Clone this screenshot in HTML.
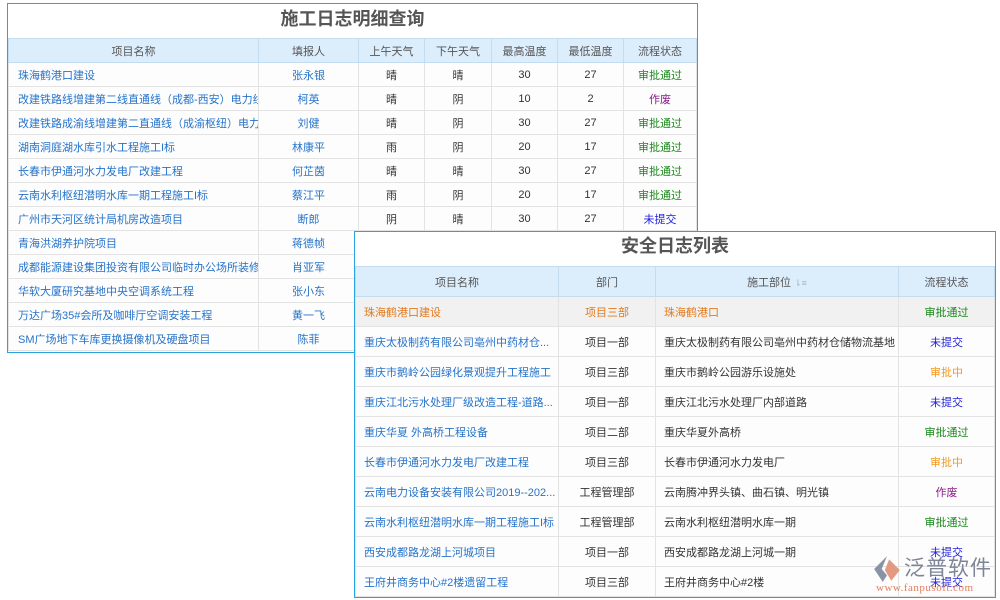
<!DOCTYPE html>
<html><head><meta charset="utf-8"><style>
*{margin:0;padding:0;box-sizing:border-box}
body{width:1000px;height:600px;background:#fff;position:relative;overflow:hidden;font-family:"Liberation Sans","Noto Sans CJK SC",sans-serif;font-size:11px}
.p{position:absolute;background:#fdfdfd;border:1px solid #29a3e0}
.t{text-align:center;font-weight:bold;color:#555;background:#fff}
table{border-collapse:collapse;table-layout:fixed;width:100%}
td,th{border:1px solid #e3e3e3;white-space:nowrap;overflow:hidden;text-align:center;color:#333;font-weight:normal}
th{background:#dcedfc;color:#555;border-color:#c4dcf0}
.l{text-align:left;padding-left:9px;color:#2673c9}
.b{color:#2673c9}
.g{color:#1a8a1a}.v{color:#8a1a8a}.u{color:#2020e0}.o{color:#f39a1e}.y{color:#e07a1f}
#a td{height:24px}#a th{height:24px}
#c td{height:30px}#c th{height:30px}
#c .l{padding-left:8px}
</style></head><body>
<div class="p" style="left:7px;top:3px;width:691px;height:350px">
<div class="t" style="height:34px;line-height:30px;font-size:18px">施工日志明细查询</div>
<table id="a"><colgroup><col style="width:250px"><col style="width:100px"><col style="width:66px"><col style="width:67px"><col style="width:66px"><col style="width:66px"><col></colgroup>
<tr><th>项目名称</th><th>填报人</th><th>上午天气</th><th>下午天气</th><th>最高温度</th><th>最低温度</th><th>流程状态</th></tr>
<tr><td class="l">珠海鹤港口建设</td><td class="b">张永银</td><td>晴</td><td>晴</td><td>30</td><td>27</td><td class="g">审批通过</td></tr>
<tr><td class="l">改建铁路线增建第二线直通线（成都-西安）电力线</td><td class="b">柯英</td><td>晴</td><td>阴</td><td>10</td><td>2</td><td class="v">作废</td></tr>
<tr><td class="l">改建铁路成渝线增建第二直通线（成渝枢纽）电力线</td><td class="b">刘健</td><td>晴</td><td>阴</td><td>30</td><td>27</td><td class="g">审批通过</td></tr>
<tr><td class="l">湖南洞庭湖水库引水工程施工I标</td><td class="b">林康平</td><td>雨</td><td>阴</td><td>20</td><td>17</td><td class="g">审批通过</td></tr>
<tr><td class="l">长春市伊通河水力发电厂改建工程</td><td class="b">何芷茵</td><td>晴</td><td>晴</td><td>30</td><td>27</td><td class="g">审批通过</td></tr>
<tr><td class="l">云南水利枢纽潜明水库一期工程施工I标</td><td class="b">蔡江平</td><td>雨</td><td>阴</td><td>20</td><td>17</td><td class="g">审批通过</td></tr>
<tr><td class="l">广州市天河区统计局机房改造项目</td><td class="b">断郎</td><td>阴</td><td>晴</td><td>30</td><td>27</td><td class="u">未提交</td></tr>
<tr><td class="l">青海洪湖养护院项目</td><td class="b">蒋德帧</td><td></td><td></td><td></td><td></td><td></td></tr>
<tr><td class="l">成都能源建设集团投资有限公司临时办公场所装修工程</td><td class="b">肖亚军</td><td></td><td></td><td></td><td></td><td></td></tr>
<tr><td class="l">华软大厦研究基地中央空调系统工程</td><td class="b">张小东</td><td></td><td></td><td></td><td></td><td></td></tr>
<tr><td class="l">万达广场35#会所及咖啡厅空调安装工程</td><td class="b">黄一飞</td><td></td><td></td><td></td><td></td><td></td></tr>
<tr><td class="l">SM广场地下车库更换摄像机及硬盘项目</td><td class="b">陈菲</td><td></td><td></td><td></td><td></td><td></td></tr>
</table></div>
<div class="p" style="left:354px;top:231px;width:642px;height:367px">
<div class="t" style="height:34px;line-height:28px;font-size:18px">安全日志列表</div>
<table id="c"><colgroup><col style="width:203px"><col style="width:97px"><col style="width:243px"><col></colgroup>
<tr><th>项目名称</th><th>部门</th><th>施工部位 <span style="color:#9bb;font-size:9px">⇂≡</span></th><th>流程状态</th></tr>
<tr style="background:#f1f1f1"><td class="l y">珠海鹤港口建设</td><td class="y">项目三部</td><td class="l y">珠海鹤港口</td><td class="g">审批通过</td></tr>
<tr><td class="l">重庆太极制药有限公司亳州中药材仓...</td><td>项目一部</td><td class="l" style="color:#333">重庆太极制药有限公司亳州中药材仓储物流基地</td><td class="u">未提交</td></tr>
<tr><td class="l">重庆市鹅岭公园绿化景观提升工程施工</td><td>项目三部</td><td class="l" style="color:#333">重庆市鹅岭公园游乐设施处</td><td class="o">审批中</td></tr>
<tr><td class="l">重庆江北污水处理厂级改造工程-道路...</td><td>项目一部</td><td class="l" style="color:#333">重庆江北污水处理厂内部道路</td><td class="u">未提交</td></tr>
<tr><td class="l">重庆华夏 外高桥工程设备</td><td>项目二部</td><td class="l" style="color:#333">重庆华夏外高桥</td><td class="g">审批通过</td></tr>
<tr><td class="l">长春市伊通河水力发电厂改建工程</td><td>项目三部</td><td class="l" style="color:#333">长春市伊通河水力发电厂</td><td class="o">审批中</td></tr>
<tr><td class="l">云南电力设备安装有限公司2019--202...</td><td>工程管理部</td><td class="l" style="color:#333">云南腾冲界头镇、曲石镇、明光镇</td><td class="v">作废</td></tr>
<tr><td class="l">云南水利枢纽潜明水库一期工程施工I标</td><td>工程管理部</td><td class="l" style="color:#333">云南水利枢纽潜明水库一期</td><td class="g">审批通过</td></tr>
<tr><td class="l">西安成都路龙湖上河城项目</td><td>项目一部</td><td class="l" style="color:#333">西安成都路龙湖上河城一期</td><td class="u">未提交</td></tr>
<tr><td class="l">王府井商务中心#2楼遗留工程</td><td>项目三部</td><td class="l" style="color:#333">王府井商务中心#2楼</td><td class="u">未提交</td></tr>
</table></div>
<div style="position:absolute;left:870px;top:553px;width:130px;height:45px;white-space:nowrap">
<svg width="30" height="28" viewBox="0 0 28 26" style="position:absolute;left:2px;top:2px"><path d="M14 1 L2 13 L10 25 L14 19 L9 13 Z" fill="#8a93a6"/><path d="M16 4 L26 14 L18 24 L12 14 Z" fill="#e39a80"/></svg>
<div style="position:absolute;left:34px;top:1px;font-size:21px;color:#7d8597;letter-spacing:1px;font-family:'Noto Sans CJK SC',sans-serif;line-height:26px;white-space:nowrap">泛普软件</div>
<div style="position:absolute;left:6px;top:29px;font-size:11px;color:#e08060;font-family:'Liberation Serif',serif;letter-spacing:.5px;white-space:nowrap">www.fanpusoft.com</div>
</div>
</body></html>
